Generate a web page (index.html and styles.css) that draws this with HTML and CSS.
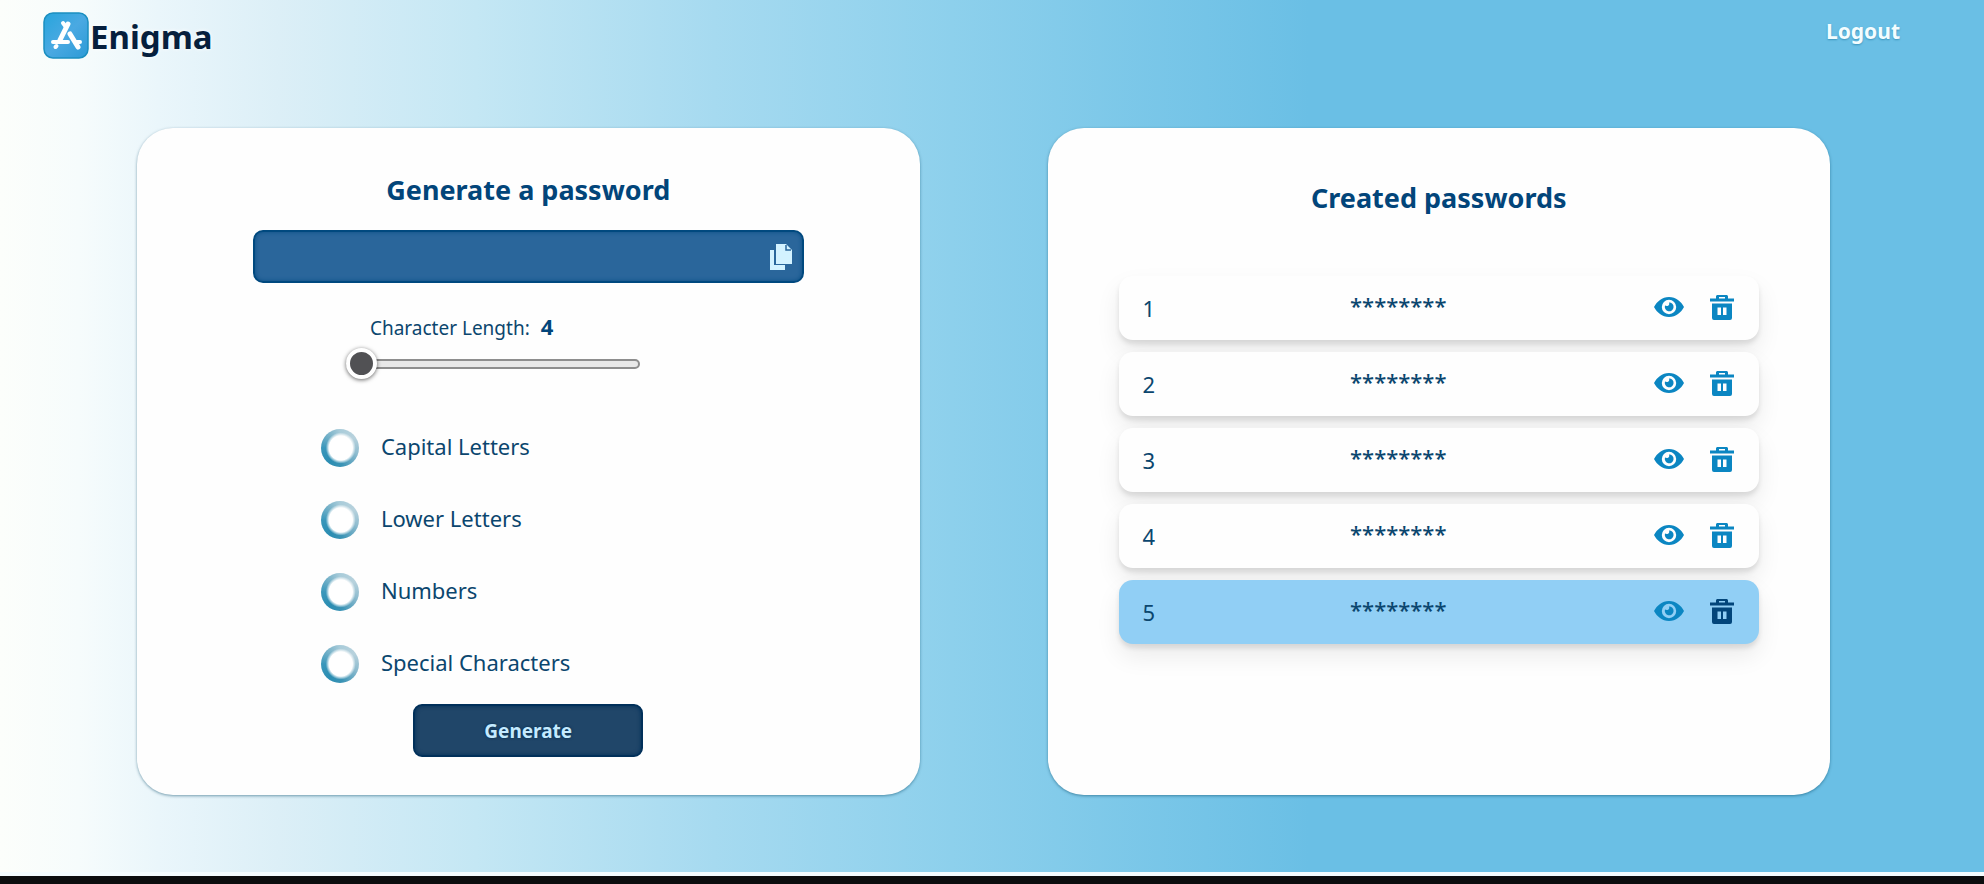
FILE: index.html
```html
<!DOCTYPE html>
<html lang="en">
<head>
<meta charset="utf-8">
<title>Enigma</title>
<link rel="stylesheet" href="styles.css">
</head>
<body>
<svg class="sprite" aria-hidden="true">
  <symbol id="eye" viewBox="0 0 30 20">
    <path fill-rule="evenodd" d="M15 0C8 0 3 4.500 0 10c3 5.500 8 10 15 10s12-4.500 15-10C27 4.500 22 0 15 0zm0 2.800a7.200 7.200 0 1 1 0 14.400a7.200 7.200 0 0 1 0-14.400z"/>
    <path d="M15 5.500c.6 1.600.2 2.800-1 3.200-1 .4-2 .2-3-.2a4.400 4.400 0 1 0 4-3z"/>
  </symbol>
  <symbol id="trash" viewBox="0 0 24 25">
    <path d="M6 3.500V1.500C6 .6 6.700 0 7.500 0h9c.8 0 1.500.6 1.500 1.500v2h6v3H0v-3zm3-1.500v1.500h6V2z"/>
    <path fill-rule="evenodd" d="M2 8.500h20V23a2 2 0 0 1-2 2H4a2 2 0 0 1-2-2zM7.500 12.500v7.500h3.500v-7.500zm5.500 0v7.500h3.500v-7.500z"/>
  </symbol>
</svg>

<header class="topbar">
  <a class="brand" href="#">
    <svg class="brand-logo" viewBox="0 0 46 47" aria-hidden="true">
      <defs><linearGradient id="logo-fill" x1="0" y1="0" x2="1" y2="1"><stop offset="0" stop-color="#27a5dc"/><stop offset=".5" stop-color="#4aa9e2"/><stop offset="1" stop-color="#2c9ad6"/></linearGradient></defs>
      <rect x="1" y="1" width="44" height="45" rx="9" fill="url(#logo-fill)" stroke="#1b8fc0" stroke-width="1.500"/>
      <g stroke="#fff" stroke-linecap="round" fill="none">
        <path stroke-width="5" d="M25 12 17 28"/>
        <path stroke-width="4" d="M20 11l3 4"/>
        <path stroke-width="4" d="M10 30h15M33 30h4"/>
        <path stroke-width="5" d="M27 22l8 13"/>
        <path stroke-width="4" d="M12.500 35l1-1"/>
      </g>
    </svg>
    <span class="brand-name">Enigma</span>
  </a>
  <a class="logout" href="#">Logout</a>
</header>

<main class="panels">
  <section class="card generator">
    <h1 class="title">Generate a password</h1>
    <div class="field">
      <input class="field-input" type="text" aria-label="Generated password" readonly>
      <button class="icon-button copy" type="button" aria-label="Copy password">
        <svg width="22" height="26" viewBox="0 0 22 26" aria-hidden="true"><path d="M0 6h4v15h11v5H0z"/><path d="M6 0h10l6 6v14H6z"/><path d="M16 1v5h5" fill="none" stroke="#2a669b" stroke-width="1.500"/></svg>
      </button>
    </div>
    <form class="options">
      <div class="length">
        <label class="length-label" for="length">Character Length: <output class="length-value" for="length">4</output></label>
        <input class="slider" id="length" type="range" min="4" max="20" value="4">
      </div>
      <label class="option"><input class="check" type="checkbox"><span class="option-text">Capital Letters</span></label>
      <label class="option"><input class="check" type="checkbox"><span class="option-text">Lower Letters</span></label>
      <label class="option"><input class="check" type="checkbox"><span class="option-text">Numbers</span></label>
      <label class="option"><input class="check" type="checkbox"><span class="option-text">Special Characters</span></label>
      <button class="generate" type="button">Generate</button>
    </form>
  </section>

  <section class="card created">
    <h2 class="title">Created passwords</h2>
    <ul class="list">
      <li class="row"><span class="number">1</span><span class="secret">********</span><button class="icon-button" type="button" aria-label="Show password 1"><svg class="eye"><use href="#eye"/></svg></button><button class="icon-button" type="button" aria-label="Delete password 1"><svg class="trash"><use href="#trash"/></svg></button></li>
      <li class="row"><span class="number">2</span><span class="secret">********</span><button class="icon-button" type="button" aria-label="Show password 2"><svg class="eye"><use href="#eye"/></svg></button><button class="icon-button" type="button" aria-label="Delete password 2"><svg class="trash"><use href="#trash"/></svg></button></li>
      <li class="row"><span class="number">3</span><span class="secret">********</span><button class="icon-button" type="button" aria-label="Show password 3"><svg class="eye"><use href="#eye"/></svg></button><button class="icon-button" type="button" aria-label="Delete password 3"><svg class="trash"><use href="#trash"/></svg></button></li>
      <li class="row"><span class="number">4</span><span class="secret">********</span><button class="icon-button" type="button" aria-label="Show password 4"><svg class="eye"><use href="#eye"/></svg></button><button class="icon-button" type="button" aria-label="Delete password 4"><svg class="trash"><use href="#trash"/></svg></button></li>
      <li class="row active"><span class="number">5</span><span class="secret">********</span><button class="icon-button" type="button" aria-label="Show password 5"><svg class="eye"><use href="#eye"/></svg></button><button class="icon-button danger" type="button" aria-label="Delete password 5"><svg class="trash"><use href="#trash"/></svg></button></li>
    </ul>
  </section>
</main>
<footer class="bottom-bar"></footer>
</body>
</html>
```
FILE: styles.css
```css
* {
  box-sizing: border-box;
}

body {
  margin: 0;
  min-height: 100vh;
  display: flex;
  flex-direction: column;
  font-family: "Noto Sans", "Open Sans", sans-serif;
  font-size: 20px;
  color: #0b466e;
  background: linear-gradient(90deg, #fcfefb 0%, #f6fcfc 4%, #eaf6fb 8%, #dceff7 14%, #c4e7f4 24%, #a6daf0 36%, #8dd0ec 48%, #6abfe5 66%);
}

.sprite {
  display: none;
}

.topbar {
  display: flex;
  justify-content: space-between;
  align-items: flex-start;
  height: 128px;
  padding: 11px 84px 0 43px;
}

.brand {
  display: flex;
  align-items: center;
  gap: 1px;
  color: #061f3d;
  text-decoration: none;
}

.brand-logo {
  width: 46px;
  height: 47px;
}

.brand-name {
  padding-top: 4px;
  font-size: 33px;
  line-height: 44px;
  font-weight: 700;
  text-shadow: 0 0 4px #fff;
}

.logout {
  color: #f4fdff;
  font-size: 21px;
  line-height: 40px;
  font-weight: 700;
  text-decoration: none;
  text-shadow: 0 1px 2px #3a94bb;
}

.panels {
  flex: 1;
  display: grid;
  grid-template-columns: 1fr 1fr;
  gap: 128px;
  padding: 0 154px 77px 137px;
}

.card {
  display: flex;
  flex-direction: column;
  align-items: center;
  border-radius: 36px;
  background: #fefefe;
  box-shadow: 0 1px 3px rgba(0, 70, 100, 0.5);
}

.generator {
  padding: 42px 24px 32px;
}

.created {
  padding: 50px 71px 32px;
}

.title {
  margin: 0;
  font-size: 27px;
  line-height: 40px;
  font-weight: 700;
  color: #02457a;
}

.field {
  display: flex;
  align-items: center;
  width: 75%;
  height: 53px;
  margin-top: 20px;
  padding-right: 10px;
  border: 2px solid #00497f;
  border-radius: 10px;
  background: #2a669b;
  box-shadow: inset 0 0 4px #0a4f86;
}

.field-input {
  flex: 1;
  min-width: 0;
  height: 100%;
  border: 0;
  padding: 0 16px;
  background: transparent;
  color: #d5f1ff;
  font: inherit;
  outline: none;
}

.icon-button {
  display: flex;
  padding: 0;
  border: 0;
  background: none;
  color: inherit;
  cursor: pointer;
}

.icon-button svg {
  fill: currentColor;
}

.copy {
  color: #d3f2ff;
}

.options {
  display: flex;
  flex-direction: column;
  gap: 32px;
  width: 57%;
}

.length {
  display: flex;
  flex-direction: column;
  gap: 4px;
  width: 294px;
  margin: 27px 0 16px 25px;
}

.length-label {
  padding-left: 24px;
  font-size: 19px;
  line-height: 32px;
}

.length-value {
  margin-left: 6px;
  font-size: 22px;
  font-weight: 700;
  color: #02457a;
}

.slider {
  appearance: none;
  width: 100%;
  height: 32px;
  margin: 0;
  background: transparent;
}

.slider::-webkit-slider-runnable-track {
  height: 10px;
  border: 2px solid #8e8e8e;
  border-radius: 5px;
  background: #e8e8e8;
}

.slider::-webkit-slider-thumb {
  appearance: none;
  width: 31px;
  height: 31px;
  margin-top: -13px;
  margin-left: -2px;
  border: 4px solid #fff;
  border-radius: 50%;
  background: #515154;
  box-shadow: 0 1px 4px rgba(0, 0, 0, 0.6);
}

.option {
  display: flex;
  align-items: center;
  gap: 22px;
  font-size: 22px;
  line-height: 36px;
}

.option-text {
  padding-bottom: 4px;
}

.check {
  appearance: none;
  width: 38px;
  height: 38px;
  margin: 0;
  border-radius: 50%;
  background:
    radial-gradient(closest-side at 52% 50%, #fff 64%, rgba(255, 255, 255, 0) 82%),
    conic-gradient(from 0deg, #a9ccda, #b8d2dd 15%, #8fbccf 30%, #3a93b5 48%, #2b8db2 60%, #3a97bb 75%, #7fb6cb 90%, #a9ccda);
}

.generate {
  align-self: center;
  width: 230px;
  height: 53px;
  margin-top: -12px;
  border: 2px solid #01305a;
  border-radius: 9px;
  background: #204669;
  box-shadow: inset 0 0 4px #01305a;
  color: #c4eaff;
  font: inherit;
  font-size: 19px;
  font-weight: 700;
  text-shadow: 0 0 3px #00284b;
}

/* Keeps the option rows aligned with the slider block. */
.options {
  padding: 0 2px;
}

.list {
  display: flex;
  flex-direction: column;
  gap: 12px;
  width: 100%;
  margin: 58px 0 0;
  padding: 0;
  list-style: none;
}

.row {
  display: flex;
  align-items: center;
  height: 64px;
  padding: 0 25px 2px 24px;
  border-radius: 14px;
  background: #fefefe;
  box-shadow: 0 12px 24px rgba(0, 0, 0, 0.08), 0 4px 5px rgba(0, 0, 0, 0.1);
  color: #0b86c2;
}

.number {
  width: 60px;
  padding-top: 2px;
  font-size: 22px;
  color: #0b466e;
}

.secret {
  flex: 1;
  padding: 0 60px 4px 0;
  font-size: 22px;
  font-weight: 500;
  text-align: center;
  color: #0b466e;
}

.eye {
  width: 30px;
  height: 20px;
  margin-right: 26px;
}

.trash {
  width: 24px;
  height: 25px;
}

.active {
  background: #91cff5;
}

.danger {
  color: #02457a;
}

.bottom-bar {
  height: 12px;
  border-top: 4px solid #f4fcff;
  background: #0c0d0e;
}
```
